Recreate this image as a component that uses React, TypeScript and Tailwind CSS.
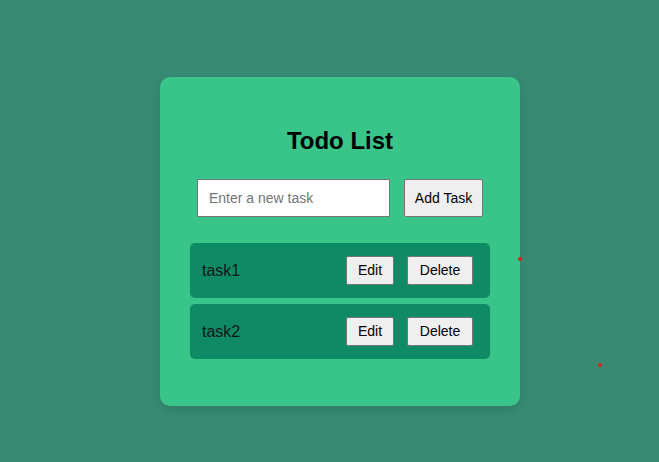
import React, { useState } from "react"

interface Task {
  id: number
  text: string
}

export default function App() {
  const [tasks, setTasks] = useState<Task[]>([
    { id: 1, text: "task1" },
    { id: 2, text: "task2" },
  ])
  const [input, setInput] = useState("")

  const addTask = () => {
    if (!input.trim()) return
    setTasks([...tasks, { id: Date.now(), text: input.trim() }])
    setInput("")
  }

  const removeTask = (id: number) => setTasks(tasks.filter((t) => t.id !== id))

  return (
    <div className="relative min-h-[462px] w-full overflow-hidden bg-[#378b73] pt-[77px] pl-[160px] font-['Liberation_Sans',Arial,sans-serif]">
      <div className="flex w-[360px] flex-col items-center rounded-[10px] bg-[#39c48a] pt-[50px] pb-[47px] shadow-[0_4px_10px_rgba(0,0,0,0.12)]">
        <h1 className="h-[28px] text-[24px] leading-[28px] font-bold text-black">Todo List</h1>

        {/* Input row */}
        <div className="mt-[24px] flex gap-[14px]">
          <input
            value={input}
            onChange={(e) => setInput(e.target.value)}
            placeholder="Enter a new task"
            className="h-[38px] w-[193px] border border-[#767676] bg-white px-[11px] text-[14px] text-black placeholder:text-[#757575] outline-none"
          />
          <button
            onClick={addTask}
            className="h-[38px] w-[79px] rounded-[2px] border border-[#767676] bg-[#efefef] text-[14px] text-black"
          >
            Add Task
          </button>
        </div>

        {/* Task list */}
        <ul className="mt-[26px] flex w-[300px] flex-col gap-[6px]">
          {tasks.map((task) => (
            <li
              key={task.id}
              className="flex h-[55px] items-center rounded-[5px] bg-[#0e8a64] pl-[12px] pr-[17px]"
            >
              <span className="flex-1 text-[16px] text-[#0a1a14]">{task.text}</span>
              <button className="h-[29px] w-[48px] rounded-[2px] border border-[#767676] bg-[#efefef] text-[14px] text-black">
                Edit
              </button>
              <button
                onClick={() => removeTask(task.id)}
                className="ml-[13px] h-[29px] w-[66px] rounded-[2px] border border-[#767676] bg-[#efefef] text-[14px] text-black"
              >
                Delete
              </button>
            </li>
          ))}
        </ul>
      </div>

      {/* stray dots */}
      <div className="absolute top-[257px] left-[518px] h-[4px] w-[4px] rounded-full bg-[#e0201c]" />
      <div className="absolute top-[363px] left-[598px] h-[4px] w-[4px] rounded-full bg-[#e0201c]" />
    </div>
  )
}
